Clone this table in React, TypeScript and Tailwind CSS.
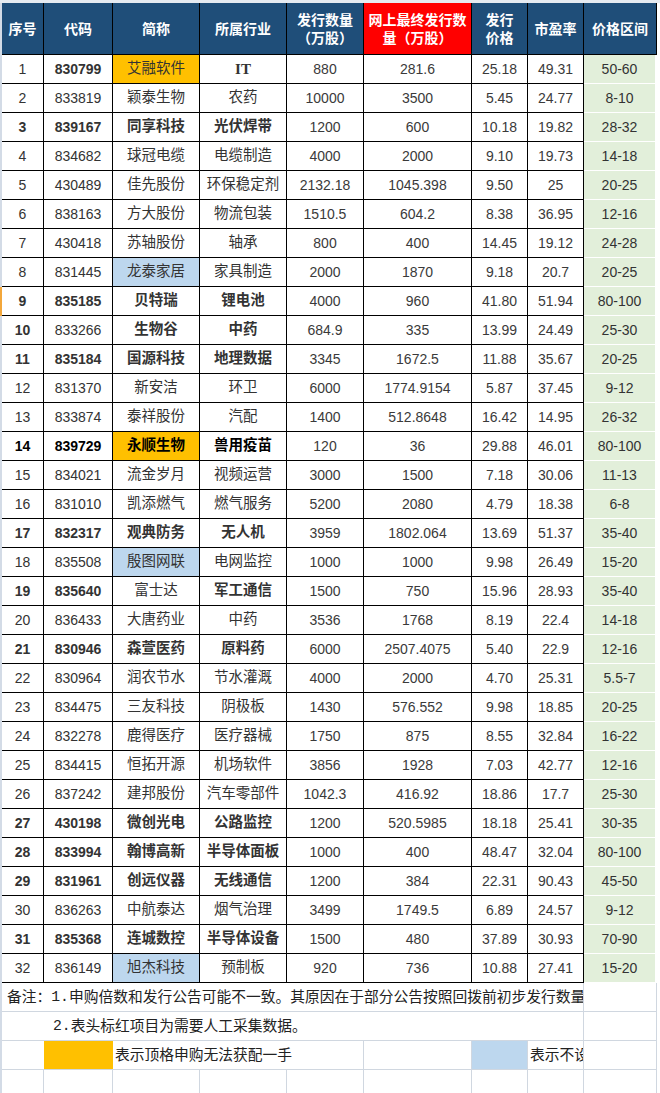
import React from "react";

type Row = {
  seq: number;
  code: string;
  name: string;
  ind: string;
  qty: string;
  online: string;
  price: string;
  pe: string;
  range: string;
  b: string; // flags: s c n i
  hl?: "y" | "b";
  dark?: boolean;
  mark?: boolean;
};

const rows: Row[] = [
  { seq: 1, code: "830799", name: "艾融软件", ind: "IT", qty: "880", online: "281.6", price: "25.18", pe: "49.31", range: "50-60", b: "c", hl: "y" },
  { seq: 2, code: "833819", name: "颖泰生物", ind: "农药", qty: "10000", online: "3500", price: "5.45", pe: "24.77", range: "8-10", b: "" },
  { seq: 3, code: "839167", name: "同享科技", ind: "光伏焊带", qty: "1200", online: "600", price: "10.18", pe: "19.82", range: "28-32", b: "scni" },
  { seq: 4, code: "834682", name: "球冠电缆", ind: "电缆制造", qty: "4000", online: "2000", price: "9.10", pe: "19.73", range: "14-18", b: "" },
  { seq: 5, code: "430489", name: "佳先股份", ind: "环保稳定剂", qty: "2132.18", online: "1045.398", price: "9.50", pe: "25", range: "20-25", b: "" },
  { seq: 6, code: "838163", name: "方大股份", ind: "物流包装", qty: "1510.5", online: "604.2", price: "8.38", pe: "36.95", range: "12-16", b: "" },
  { seq: 7, code: "430418", name: "苏轴股份", ind: "轴承", qty: "800", online: "400", price: "14.45", pe: "19.12", range: "24-28", b: "" },
  { seq: 8, code: "831445", name: "龙泰家居", ind: "家具制造", qty: "2000", online: "1870", price: "9.18", pe: "20.7", range: "20-25", b: "", hl: "b" },
  { seq: 9, code: "835185", name: "贝特瑞", ind: "锂电池", qty: "4000", online: "960", price: "41.80", pe: "51.94", range: "80-100", b: "scni", mark: true },
  { seq: 10, code: "833266", name: "生物谷", ind: "中药", qty: "684.9", online: "335", price: "13.99", pe: "24.49", range: "25-30", b: "sni" },
  { seq: 11, code: "835184", name: "国源科技", ind: "地理数据", qty: "3345", online: "1672.5", price: "11.88", pe: "35.67", range: "20-25", b: "scni" },
  { seq: 12, code: "831370", name: "新安洁", ind: "环卫", qty: "6000", online: "1774.9154", price: "5.87", pe: "37.45", range: "9-12", b: "" },
  { seq: 13, code: "833874", name: "泰祥股份", ind: "汽配", qty: "1400", online: "512.8648", price: "16.42", pe: "14.95", range: "26-32", b: "" },
  { seq: 14, code: "839729", name: "永顺生物", ind: "兽用疫苗", qty: "120", online: "36", price: "29.88", pe: "46.01", range: "80-100", b: "scni", hl: "y", dark: true },
  { seq: 15, code: "834021", name: "流金岁月", ind: "视频运营", qty: "3000", online: "1500", price: "7.18", pe: "30.06", range: "11-13", b: "" },
  { seq: 16, code: "831010", name: "凯添燃气", ind: "燃气服务", qty: "5200", online: "2080", price: "4.79", pe: "18.38", range: "6-8", b: "" },
  { seq: 17, code: "832317", name: "观典防务", ind: "无人机", qty: "3959", online: "1802.064", price: "13.69", pe: "51.37", range: "35-40", b: "scni" },
  { seq: 18, code: "835508", name: "殷图网联", ind: "电网监控", qty: "1000", online: "1000", price: "9.98", pe: "26.49", range: "15-20", b: "", hl: "b" },
  { seq: 19, code: "835640", name: "富士达", ind: "军工通信", qty: "1500", online: "750", price: "15.96", pe: "28.93", range: "35-40", b: "sci" },
  { seq: 20, code: "836433", name: "大唐药业", ind: "中药", qty: "3536", online: "1768", price: "8.19", pe: "22.4", range: "14-18", b: "" },
  { seq: 21, code: "830946", name: "森萱医药", ind: "原料药", qty: "6000", online: "2507.4075", price: "5.40", pe: "22.9", range: "12-16", b: "scni" },
  { seq: 22, code: "830964", name: "润农节水", ind: "节水灌溉", qty: "4000", online: "2000", price: "4.70", pe: "25.31", range: "5.5-7", b: "" },
  { seq: 23, code: "834475", name: "三友科技", ind: "阴极板", qty: "1430", online: "576.552", price: "9.98", pe: "18.85", range: "20-25", b: "" },
  { seq: 24, code: "832278", name: "鹿得医疗", ind: "医疗器械", qty: "1750", online: "875", price: "8.55", pe: "32.84", range: "16-22", b: "" },
  { seq: 25, code: "834415", name: "恒拓开源", ind: "机场软件", qty: "3856", online: "1928", price: "7.03", pe: "42.77", range: "12-16", b: "" },
  { seq: 26, code: "837242", name: "建邦股份", ind: "汽车零部件", qty: "1042.3", online: "416.92", price: "18.86", pe: "17.7", range: "25-30", b: "" },
  { seq: 27, code: "430198", name: "微创光电", ind: "公路监控", qty: "1200", online: "520.5985", price: "18.18", pe: "25.41", range: "30-35", b: "scni" },
  { seq: 28, code: "833994", name: "翰博高新", ind: "半导体面板", qty: "1000", online: "400", price: "48.47", pe: "32.04", range: "80-100", b: "scni" },
  { seq: 29, code: "831961", name: "创远仪器", ind: "无线通信", qty: "1200", online: "384", price: "22.31", pe: "90.43", range: "45-50", b: "scni" },
  { seq: 30, code: "836263", name: "中航泰达", ind: "烟气治理", qty: "3499", online: "1749.5", price: "6.89", pe: "24.57", range: "9-12", b: "" },
  { seq: 31, code: "835368", name: "连城数控", ind: "半导体设备", qty: "1500", online: "480", price: "37.89", pe: "30.93", range: "70-90", b: "scni" },
  { seq: 32, code: "836149", name: "旭杰科技", ind: "预制板", qty: "920", online: "736", price: "10.88", pe: "27.41", range: "15-20", b: "", hl: "b" },
];

const grid = "grid grid-cols-[2px_42px_69px_87px_87px_77px_108px_56px_56px_73px]";
const cell = "flex items-center justify-center border-r border-b border-black whitespace-nowrap overflow-hidden";
const hcell = "flex items-center justify-center border-r border-b border-black text-white font-bold text-[14px] leading-[18px] text-center";
const gcell = "border-r border-b border-[#d0d7e0]";

function DataRow({ r }: { r: Row }) {
  const col = r.dark ? "text-black" : "text-[#333]";
  const w = (f: string) => (r.b.includes(f) ? "font-bold" : "font-normal");
  const nameBg = r.hl === "y" ? "bg-[#ffc000] text-[#5a4a10]" : r.hl === "b" ? "bg-[#bdd7ee] text-[#4a5563]" : "";
  return (
    <div className={`${grid} h-[29px]`}>
      <div className={r.mark ? "bg-[#f3a73b]" : "bg-[#d3dbe6]"} />
      <div className={`${cell} ${col} ${w("s")} text-[14px]`}>{r.seq}</div>
      <div className={`${cell} ${col} ${w("c")} text-[14px]`}>{r.code}</div>
      <div className={`${cell} ${col} ${w("n")} ${nameBg} text-[14.5px]`}>{r.name}</div>
      {r.ind === "IT" ? (
        <div className={`${cell} text-[#333] font-bold text-[15px] font-['Liberation_Serif',serif]`}>IT</div>
      ) : (
        <div className={`${cell} ${col} ${w("i")} text-[14.5px]`}>{r.ind}</div>
      )}
      <div className={`${cell} text-[#3a3a3a] text-[14px]`}>{r.qty}</div>
      <div className={`${cell} text-[#3a3a3a] text-[14px]`}>{r.online}</div>
      <div className={`${cell} text-[#3a3a3a] text-[14px]`}>{r.price}</div>
      <div className={`${cell} text-[#3a3a3a] text-[14px]`}>{r.pe}</div>
      <div className="flex items-center justify-center border-r-2 border-b border-white bg-[#e2efda] text-[#333] text-[14px]">{r.range}</div>
    </div>
  );
}

export default function App() {
  return (
    <div className="w-[660px] h-[1093px] overflow-hidden bg-white font-['Liberation_Sans','Noto_Sans_CJK_SC',sans-serif]">
      <div className="h-[3px] bg-[#e6ebf1]" />
      {/* header */}
      <div className={`${grid} h-[52px]`}>
        <div className="bg-[#d3dbe6]" />
        <div className={`${hcell} bg-[#1f4e79]`}>序号</div>
        <div className={`${hcell} bg-[#1f4e79]`}>代码</div>
        <div className={`${hcell} bg-[#1f4e79]`}>简称</div>
        <div className={`${hcell} bg-[#1f4e79]`}>所属行业</div>
        <div className={`${hcell} bg-[#1f4e79]`}>
          发行数量
          <br />
          （万股）
        </div>
        <div className={`${hcell} bg-[#ff0000] px-[4px]`}>网上最终发行数量（万股）</div>
        <div className={`${hcell} bg-[#1f4e79]`}>
          发行
          <br />
          价格
        </div>
        <div className={`${hcell} bg-[#1f4e79]`}>市盈率</div>
        <div className={`${hcell} bg-[#1f4e79]`}>价格区间</div>
      </div>
      {rows.map((r) => (
        <DataRow key={r.seq} r={r} />
      ))}
      {/* footer */}
      <div className="text-[14.75px] text-[#222]">
        <div className={`${grid} h-[29px]`}>
          <div className="bg-[#d3dbe6]" />
          <div className={`col-span-8 ${gcell} flex items-center whitespace-nowrap overflow-hidden pl-[5px]`}>
            备注：<span className="font-['Liberation_Mono',monospace]">1.</span>申购倍数和发行公告可能不一致。其原因在于部分公告按照回拨前初步发行数量
          </div>
          <div className={gcell} />
        </div>
        <div className={`${grid} h-[29px]`}>
          <div className="bg-[#d3dbe6]" />
          <div className={`col-span-8 ${gcell} flex items-center whitespace-nowrap overflow-hidden pl-[51px]`}>
            <span className="font-['Liberation_Mono',monospace]">2.</span>表头标红项目为需要人工采集数据。
          </div>
          <div className={gcell} />
        </div>
        <div className={`${grid} h-[29px]`}>
          <div className="bg-[#d3dbe6]" />
          <div className="border-b border-[#d0d7e0]" />
          <div className="border-b border-[#d0d7e0] bg-[#ffc000]" />
          <div className={`col-span-3 ${gcell} flex items-center whitespace-nowrap overflow-hidden pl-[2px]`}>
            表示顶格申购无法获配一手
          </div>
          <div className={gcell} />
          <div className={`${gcell} bg-[#bdd7ee]`} />
          <div className={`${gcell} flex items-center whitespace-nowrap overflow-hidden pl-[2px]`}>表示不设</div>
          <div className={gcell} />
        </div>
        <div className={`${grid} h-[29px]`}>
          <div className="bg-[#d3dbe6]" />
          <div className={gcell} />
          <div className={gcell} />
          <div className={gcell} />
          <div className={gcell} />
          <div className={gcell} />
          <div className={gcell} />
          <div className={gcell} />
          <div className={gcell} />
          <div className={gcell} />
        </div>
      </div>
    </div>
  );
}
